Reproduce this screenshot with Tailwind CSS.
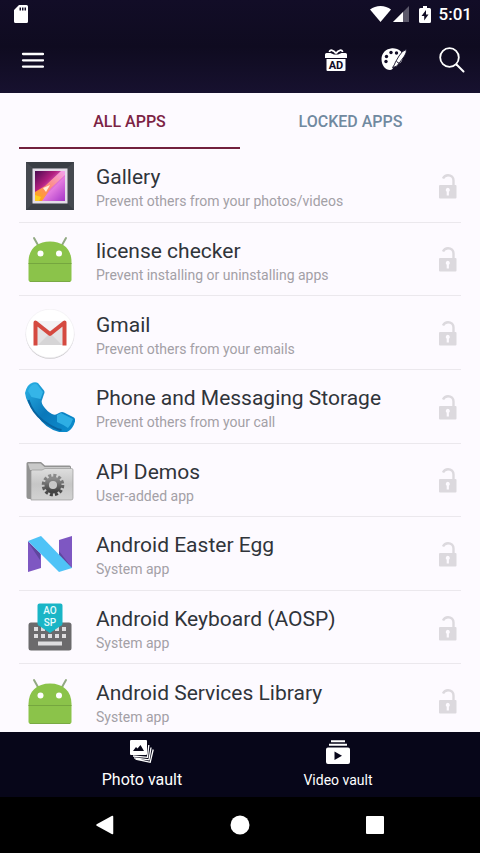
<!DOCTYPE html>
<html lang="en">
<head>
    <meta charset="UTF-8">
    <meta name="viewport" content="width=device-width, initial-scale=1">
    <title>App Lock</title>
    <script src="https://cdn.jsdelivr.net/npm/@tailwindcss/browser@4"></script>
</head>
<body class="flex flex-col h-screen overflow-hidden bg-[#fdfaff] font-[Roboto,sans-serif]">

<!-- Shared icons -->
<svg class="hidden" aria-hidden="true">
    <defs>
        <symbol id="lock" viewBox="0 0 18 25">
            <path d="M4 4.500C5 2.300 6.800 1.200 9 1.200c3.300 0 5.500 2.300 5.500 5.300V12" fill="none" stroke="#dcd9de" stroke-width="2.400"/>
            <path fill-rule="evenodd" d="M1 11h15.500q1 0 1 1v11.500q0 1-1 1H1q-1 0-1-1V12q0-1 1-1zm7.800 2.800a2.200 2.200 0 0 0-1.100 4v3.700h2.200v-3.700a2.200 2.200 0 0 0-1.100-4z" fill="#dcd9de"/>
        </symbol>
        <symbol id="android" viewBox="0 0 50 50">
            <path d="M9 3l4.500 8M41 3l-4.500 8" stroke="#91a982" stroke-width="2" stroke-linecap="round"/>
            <path d="M3.500 27C3.500 14 12 6.500 25 6.500S46.500 14 46.500 27v17.500q0 2.500-2.500 2.500H6q-2.500 0-2.500-2.500z" fill="#8bc34a"/>
            <path d="M5 46.500h40" stroke="#79a944" stroke-width="1"/>
            <path d="M3.500 28.500h43" stroke="#75a63f" stroke-width="1"/>
            <circle cx="15.500" cy="18.500" r="3" fill="#fff"/>
            <circle cx="34" cy="18.500" r="3" fill="#fff"/>
        </symbol>
    </defs>
</svg>

<header class="bg-linear-to-b from-[#120d27] via-[#0f0b20] to-[#17112f]">
    <!-- Status bar -->
    <div class="flex items-center h-7 pl-[14px] pr-2 text-white">
        <svg class="w-[14px] h-[18px]" viewBox="0 0 14 18"><path fill-rule="evenodd" d="M5 0h7.500Q14 0 14 1.500v15q0 1.500-1.500 1.500h-11Q0 18 0 16.500V5zm.5 2.500v3H7v-3zm2.500 0v3h1.500v-3zm2.500 0v3H12v-3z" fill="#fff"/></svg>
        <svg class="ml-auto w-[21px] h-4" viewBox="0 0 21 16"><path d="M10.500 16L0 3.500Q4.500 0 10.500 0T21 3.500z" fill="#fff"/></svg>
        <svg class="ml-[2px] w-4 h-4" viewBox="0 0 16 16"><path d="M16 0v16H0z" fill="#5c596b"/><path d="M10 6v10H0z" fill="#fff"/></svg>
        <svg class="ml-[10px] w-3 h-[17px]" viewBox="0 0 12 17"><path fill-rule="evenodd" d="M4 0h4v2h2.500Q12 2 12 3.500v12q0 1.500-1.500 1.500h-9Q0 17 0 15.500v-12Q0 2 1.500 2H4zm3 4l-4.500 6h2.700v4.500L9.500 8.500H7z" fill="#fff"/></svg>
        <span class="ml-2 text-[17px] leading-7 font-medium">5:01</span>
    </div>

    <!-- Toolbar -->
    <div class="flex items-center h-[65px] pl-[21px] pr-[15px] pb-[2px]">
        <button type="button" aria-label="Menu">
            <svg class="w-[23px] h-4" viewBox="0 0 23 16"><path d="M2 2h20M2 8.300h20M2 14.600h20" stroke="#fff" stroke-width="2.300" stroke-linecap="round"/></svg>
        </button>
        <button type="button" aria-label="Gift" class="ml-auto">
            <svg class="w-[22px] h-[22px]" viewBox="0 0 22 22">
                <path d="M11 4.500C9 1 4.500 0 4.500 3M11 4.500C13 1 17.500 0 17.500 3" fill="none" stroke="#fff" stroke-width="1.800"/>
                <path d="M1.500 4h4L9 5.500h4L16.500 4h4Q22 4 22 5.500V9H0V5.500Q0 4 1.500 4zM1.500 10h19v11q0 1-1 1h-17q-1 0-1-1z" fill="#fff"/>
                <text x="11" y="19.800" text-anchor="middle" font-family="Roboto, sans-serif" font-size="11" font-weight="700" fill="#120d27">AD</text>
            </svg>
        </button>
        <button type="button" aria-label="Themes" class="ml-[34px]">
            <svg class="w-[26px] h-[23px]" viewBox="0 0 26 23">
                <path d="M20 3.500C17.500 1 14 0 11 .2 5 .8 .5 5 .5 11c0 6.500 4 11 8.500 11 4 0 2.500-4 5-5.500 2-1 5 0 7-4 1-2.500 1-6-1-9z" fill="#fff"/>
                <g fill="#120d27">
                    <circle cx="10" cy="4.500" r="1.700"/><circle cx="15.500" cy="5" r="1.700"/>
                    <circle cx="5.500" cy="8.500" r="1.700"/><circle cx="5" cy="13.500" r="1.700"/>
                </g>
                <path d="M25.500 1.500Q21 2.500 18 8l-3.500 6q-1 3-3 5.500 4.500-.5 6-3.500l6-8q2-3 2-6.500z" fill="#fff" stroke="#120d27" stroke-width=".9"/>
                <path d="M15.500 13.500l2.500 1.800" stroke="#120d27" stroke-width="1"/>
            </svg>
        </button>
        <button type="button" aria-label="Search" class="ml-8">
            <svg class="w-[26px] h-[26px]" viewBox="0 0 26 26"><circle cx="10.500" cy="10.500" r="9.300" fill="none" stroke="#fff" stroke-width="1.800"/><path d="M17.500 17.500l7 7" stroke="#fff" stroke-width="2" stroke-linecap="round"/></svg>
        </button>
    </div>
</header>

<!-- Tabs -->
<nav class="grid grid-cols-2 shrink-0 h-14 px-[19px] text-base font-medium">
    <button type="button" class="pt-1 border-b-2 border-[#72203d] text-[#7c2344]">ALL APPS</button>
    <button type="button" class="pt-1 border-b-2 border-transparent text-[#7189a0]">LOCKED APPS</button>
</nav>

<!-- App list -->
<main class="flex-1 min-h-0 overflow-hidden px-[19px]">
    <ul class="grid auto-rows-fr min-h-[589px]">
        <li class="flex items-center border-b border-[#ebe8ed] pt-[2px] pl-[6px] pr-1">
            <svg class="w-[50px] h-[50px] shrink-0" viewBox="0 0 50 50">
                <defs>
                    <linearGradient id="photo" x1="0" y1="0" x2="1" y2="1"><stop offset="0" stop-color="#4a0a50"/><stop offset=".35" stop-color="#b3207f"/><stop offset=".6" stop-color="#e47be0"/><stop offset="1" stop-color="#a536c8"/></linearGradient>
                    <linearGradient id="glow" x1="0" y1="1" x2="1" y2="0"><stop offset="0" stop-color="#ffb000"/><stop offset=".4" stop-color="#ff8a6a"/><stop offset="1" stop-color="#f3a0f0"/></linearGradient>
                </defs>
                <path d="M1 1h48v48H1z" fill="#454950"/>
                <path d="M1 1h48L42 7H8zM1 49h48l-7-7H8z" fill="#3a3e45"/>
                <path d="M7.500 7.500h35v35h-35z" fill="#e4dde8"/>
                <path d="M10 10h30v30H10z" fill="url(#photo)"/>
                <path d="M10 31l10-6L36 10h4v4L26 27l-9 13h-7z" fill="url(#glow)"/>
                <path d="M10 34l6 2-2 4h-4z" fill="#ffcf20"/>
                <path d="M18 27l7-3-4 7z" fill="#fff0d8"/>
            </svg>
            <div class="ml-[21px] pt-[2px] flex-1">
                <h2 class="text-[21px] leading-7 text-[#30343a]">Gallery</h2>
                <p class="text-sm text-[#a3a0a6]">Prevent others from your photos/videos</p>
            </div>
            <button type="button" aria-label="Lock Gallery"><svg class="w-[18px] h-[25px]"><use href="#lock"/></svg></button>
        </li>
        <li class="flex items-center border-b border-[#ebe8ed] pt-[2px] pl-[6px] pr-1">
            <svg class="w-[50px] h-[50px] shrink-0"><use href="#android"/></svg>
            <div class="ml-[21px] pt-[2px] flex-1">
                <h2 class="text-[21px] leading-7 text-[#30343a]">license checker</h2>
                <p class="text-sm text-[#a3a0a6]">Prevent installing or uninstalling apps</p>
            </div>
            <button type="button" aria-label="Lock license checker"><svg class="w-[18px] h-[25px]"><use href="#lock"/></svg></button>
        </li>
        <li class="flex items-center border-b border-[#ebe8ed] pt-[2px] pl-[6px] pr-1">
            <svg class="w-[50px] h-[50px] shrink-0" viewBox="0 0 50 50">
                <circle cx="25" cy="25.500" r="24.300" fill="#c9c7ca"/>
                <circle cx="25" cy="24.500" r="24.300" fill="#fff" stroke="#efedf0" stroke-width=".6"/>
                <path d="M9 12h32v24H9z" fill="#e4e3e4"/>
                <path d="M13 36l12-12 12 12z" fill="#d6d5d6"/>
                <path d="M12 12h26L25 22z" fill="#f4f3f4"/>
                <path d="M10.500 36.500V13.500L25 25l14.500-11.500v23" fill="none" stroke="#d54a40" stroke-width="4" stroke-linejoin="round"/>
            </svg>
            <div class="ml-[21px] pt-[2px] flex-1">
                <h2 class="text-[21px] leading-7 text-[#30343a]">Gmail</h2>
                <p class="text-sm text-[#a3a0a6]">Prevent others from your emails</p>
            </div>
            <button type="button" aria-label="Lock Gmail"><svg class="w-[18px] h-[25px]"><use href="#lock"/></svg></button>
        </li>
        <li class="flex items-center border-b border-[#ebe8ed] pt-[2px] pl-[6px] pr-1">
            <svg class="w-[50px] h-[50px] shrink-0" viewBox="0 0 50 50">
                <defs><linearGradient id="phone" x1="0" y1="0" x2="1" y2="1"><stop offset="0" stop-color="#2bb3e6"/><stop offset=".5" stop-color="#0a78ba"/><stop offset="1" stop-color="#0c8fcf"/></linearGradient></defs>
                <path d="M0 11Q2 2 8 .5q3-.7 5 .5l6 7.500q1 1.500 0 3.500l-2 6q-1 2.500 1 5.500 4 6 9 8.500 3 1.500 5 0l3-1.500q2-1 4 0l9 4.500q3 1.500 2 4.500-2 7-7 10-3 1.500-6.500 1-16-3-25-18Q1 21 0 11z" fill="url(#phone)"/>
                <path d="M3 9Q5 3 9.500 2q2-.5 3 1l5.500 7-2.500 7-9-2z" fill="#35b5e8"/>
                <path d="M32 33l4-2 12 6q-2 6-5 9-6-4-11-6z" fill="#2eaee4"/>
                <path d="M3.500 18q4 13 15 21t18 9" fill="none" stroke="#07639f" stroke-width="2"/>
            </svg>
            <div class="ml-[21px] pt-[2px] flex-1">
                <h2 class="text-[21px] leading-7 text-[#30343a]">Phone and Messaging Storage</h2>
                <p class="text-sm text-[#a3a0a6]">Prevent others from your call</p>
            </div>
            <button type="button" aria-label="Lock Phone and Messaging Storage"><svg class="w-[18px] h-[25px]"><use href="#lock"/></svg></button>
        </li>
        <li class="flex items-center border-b border-[#ebe8ed] pt-[2px] pl-[6px] pr-1">
            <svg class="w-[50px] h-[50px] shrink-0" viewBox="0 0 50 50">
                <defs>
                    <linearGradient id="folder" x1="0" y1="0" x2="0" y2="1"><stop offset="0" stop-color="#dedede"/><stop offset=".5" stop-color="#c6c6c6"/><stop offset="1" stop-color="#d2d2d2"/></linearGradient>
                    <linearGradient id="gear" x1="0" y1="0" x2="0" y2="1"><stop offset="0" stop-color="#8c8c8c"/><stop offset="1" stop-color="#444"/></linearGradient>
                </defs>
                <path d="M1.500 7.500Q1.500 6 3 6h13l4 3.500h24.500q1.500 0 1.500 1.500v32H4q-2.500 0-2.500-2.500z" fill="#929292"/>
                <path d="M3 7.500h12.500l4 3.500H45v3H5z" fill="#c9c9c9"/>
                <path d="M6 15.500q0-1.500 1.500-1.500H17l3-1.500h26.500q1.500 0 1.500 1.500v28q0 2-2 2H6z" fill="url(#folder)" stroke="#999" stroke-width=".7"/>
                <circle cx="28" cy="29" r="9.300" fill="none" stroke="url(#gear)" stroke-width="4" stroke-dasharray="2.900 1.970"/>
                <circle cx="28" cy="29" r="6.300" fill="none" stroke="url(#gear)" stroke-width="4.500"/>
            </svg>
            <div class="ml-[21px] pt-[2px] flex-1">
                <h2 class="text-[21px] leading-7 text-[#30343a]">API Demos</h2>
                <p class="text-sm text-[#a3a0a6]">User-added app</p>
            </div>
            <button type="button" aria-label="Lock API Demos"><svg class="w-[18px] h-[25px]"><use href="#lock"/></svg></button>
        </li>
        <li class="flex items-center border-b border-[#ebe8ed] pt-[2px] pl-[6px] pr-1">
            <svg class="w-[50px] h-[50px] shrink-0" viewBox="0 0 50 50">
                <path d="M3 12l13 13v14L3 43zM34 11l13-4v32L34 28z" fill="#7e57c2"/>
                <path d="M3 13l12 11v7zM47 39L34 22v8z" fill="#5f469e"/>
                <path d="M3 12l13-5 31 32-13 4z" fill="#4fc3f7"/>
            </svg>
            <div class="ml-[21px] pt-[2px] flex-1">
                <h2 class="text-[21px] leading-7 text-[#30343a]">Android Easter Egg</h2>
                <p class="text-sm text-[#a3a0a6]">System app</p>
            </div>
            <button type="button" aria-label="Lock Android Easter Egg"><svg class="w-[18px] h-[25px]"><use href="#lock"/></svg></button>
        </li>
        <li class="flex items-center border-b border-[#ebe8ed] pt-[2px] pl-[6px] pr-1">
            <svg class="w-[50px] h-[50px] shrink-0" viewBox="0 0 50 50">
                <rect x="3.500" y="19.500" width="43" height="28" rx="2.500" fill="#6b6a6c"/>
                <path d="M9 24h4v4H9zM16 24h4v4h-4zM30 24h4v4h-4zM37 24h4v4h-4zM9 31h4v4H9zM16 31h4v4h-4zM23 31h4v4h-4zM30 31h4v4h-4zM37 31h4v4h-4zM13 38.500h24v4H13z" fill="#dedddf"/>
                <path d="M14.500 .5h21q2 0 2 2v18q0 2-2 2.500L25 30l-10.500-7q-2-.5-2-2.500v-18q0-2 2-2z" fill="#1ab5c6"/>
                <g font-family="Roboto, sans-serif" font-size="10" font-weight="500" fill="#e6fbfd" text-anchor="middle">
                    <text x="25" y="11">AO</text>
                    <text x="25" y="23">SP</text>
                </g>
            </svg>
            <div class="ml-[21px] pt-[2px] flex-1">
                <h2 class="text-[21px] leading-7 text-[#30343a]">Android Keyboard (AOSP)</h2>
                <p class="text-sm text-[#a3a0a6]">System app</p>
            </div>
            <button type="button" aria-label="Lock Android Keyboard (AOSP)"><svg class="w-[18px] h-[25px]"><use href="#lock"/></svg></button>
        </li>
        <li class="flex items-center border-b border-[#ebe8ed] pt-[2px] pl-[6px] pr-1">
            <svg class="w-[50px] h-[50px] shrink-0"><use href="#android"/></svg>
            <div class="ml-[21px] pt-[2px] flex-1">
                <h2 class="text-[21px] leading-7 text-[#30343a]">Android Services Library</h2>
                <p class="text-sm text-[#a3a0a6]">System app</p>
            </div>
            <button type="button" aria-label="Lock Android Services Library"><svg class="w-[18px] h-[25px]"><use href="#lock"/></svg></button>
        </li>
    </ul>
</main>

<!-- Vault bar -->
<nav class="grid grid-cols-2 shrink-0 h-[65px] px-11 bg-[#070619] text-white">
    <a href="#photos" class="flex flex-col items-center pt-2">
        <svg class="w-6 h-6" viewBox="0 0 24 24">
            <path fill-rule="evenodd" d="M1 0h15q1 0 1 1v13q0 1-1 1H1q-1 0-1-1V1q0-1 1-1zm2 11h11l-3.500-6-3 3.500-1.500-1.500z" fill="#fff"/>
            <path d="M18.800 5L17.500 17.300 3 16M21 7.500l-2 12.300L4 17.800M23.200 9.500l-3 12.800L5.500 19" fill="none" stroke="#fff" stroke-width="1.300"/>
        </svg>
        <span class="mt-1 text-base leading-6">Photo vault</span>
    </a>
    <a href="#videos" class="flex flex-col items-center pt-2">
        <svg class="w-6 h-6" viewBox="0 0 24 24">
            <path d="M5 1.200h14M3 4.700h18" stroke="#fff" stroke-width="2"/>
            <path fill-rule="evenodd" d="M2 7.500h20q2 0 2 2V22q0 2-2 2H2q-2 0-2-2V9.500q0-2 2-2zm6.500 4v8.500l7.500-4.300z" fill="#fff"/>
        </svg>
        <span class="mt-1 text-sm leading-6">Video vault</span>
    </a>
</nav>

<!-- System navigation -->
<nav class="grid grid-cols-3 shrink-0 h-14 px-[38px] bg-black">
    <button type="button" aria-label="Back" class="flex items-center justify-center"><svg class="w-5 h-5" viewBox="0 0 20 20"><path d="M17.500 1.500v17L2 10z" fill="#fff" stroke="#fff" stroke-width="1.500" stroke-linejoin="round"/></svg></button>
    <button type="button" aria-label="Home" class="flex items-center justify-center"><svg class="w-5 h-5" viewBox="0 0 20 20"><circle cx="10" cy="10" r="9.500" fill="#fff"/></svg></button>
    <button type="button" aria-label="Recent apps" class="flex items-center justify-center"><svg class="w-5 h-5" viewBox="0 0 20 20"><rect x="1" y="1" width="18" height="18" rx="1" fill="#fff"/></svg></button>
</nav>

</body>
</html>
